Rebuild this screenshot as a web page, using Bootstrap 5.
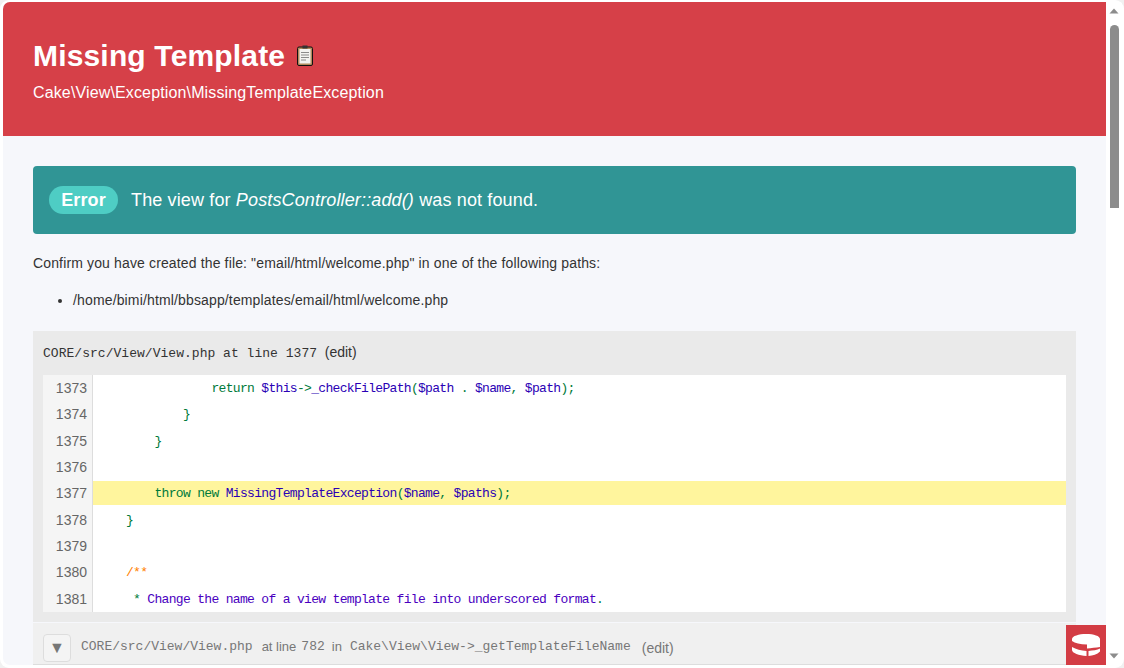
<!DOCTYPE html>
<html lang="en"><head><meta charset="utf-8"><title>Missing Template</title>
<link href="https://cdn.jsdelivr.net/npm/bootstrap@5.3.0/dist/css/bootstrap.min.css" rel="stylesheet">
<style>
html,body{height:100%;overflow:hidden;margin:0;background:#f1f1f1}
body{font-family:"Liberation Sans",Arial,sans-serif;font-size:14px;color:#333}
.win{height:668px;background:#fff;border-radius:9px;padding:2px 2px 3px 3px;overflow:hidden;position:relative}
.pagearea{flex:1 1 auto;min-width:0;background:#f6f7fb;overflow:hidden;height:663px;position:relative;border-radius:7px 0 0 7px}
.hd{background:#d64048;color:#fff;padding:31px 30px 0;height:134px}
.hd h1{font-size:30px;font-weight:700;margin:0;height:46px;line-height:46px;font-family:inherit;letter-spacing:.17px}
.hd .sub{font-size:16px;line-height:24px;margin-top:2px;letter-spacing:.14px}
.clip{display:inline-block;vertical-align:0;margin-left:3px}
.cnt{padding:30px 30px 0}
.errbox{background:#309595;color:#fff;height:68px;border-radius:4px;padding:0 16px;font-size:18px;letter-spacing:.14px}
.errpill{background:#4ecdc4;border-radius:14px;font-weight:700;height:28px;line-height:28px;width:69px;text-align:center;margin-right:13px}
.cfm{margin:20px 0 0;line-height:18px;letter-spacing:.14px}
.pathlist{margin:19px 0 0;padding-left:40px;line-height:18px;letter-spacing:.145px}
.frame{background:#eaeaea;margin-top:22px;padding:10px;height:291px}
.monof{font-family:"Liberation Mono",monospace}
.fhead{font-size:13px;line-height:23px;height:34px;color:#333}
.fhead .monof{letter-spacing:.03px}
.fhead .ed{font-family:"Liberation Sans",sans-serif;font-size:14px;margin-left:4px}
.codebox{background:#fff;height:237px;overflow:hidden}
.cl{height:26.33px;line-height:26.33px;display:flex}
.cl .num{width:50px;flex:none;background:#f5f5f5;border-right:1px solid #ddd;text-align:right;padding-right:5px;font-size:14px;color:#666}
.cl pre{margin:0;padding:1px 0 0 4.5px;font:13px/26.33px "Liberation Mono",monospace;letter-spacing:-.68px;flex:1;overflow:hidden}
.cl.hl pre{background:#fff59d;height:24px;line-height:24px;align-self:center;padding-top:1px}
.tg{color:#007a3a}.tb{color:#2a00b5}.to{color:#ff8000}.ts{color:#4a00c0}
.stk{background:#f0f0f0;margin-top:1px;height:42px;padding:11px 10px 0;color:#777;font-size:13px;border-bottom:1px solid #ddd}
.tog{width:28px;height:28px;border:1px solid #ddd;border-radius:4px;background:#f4f4f4;margin-right:10px;color:#777}
.stk .ed2{font-family:"Liberation Sans",sans-serif;font-size:14px;margin-left:11px}
.stk .al1{font-family:"Liberation Sans",sans-serif;margin:0 5px 0 9px}
.stk .al2{font-family:"Liberation Sans",sans-serif;margin:0 8px 0 7px}
.cakelogo{position:absolute;right:0;bottom:0;width:40px;height:40px;background:#d33c44}
.sbar{width:16px;flex:none;height:663px;background:#fff}
.arr{height:17px}
.thumb{width:9px;height:183px;background:#8c8c8c;border-radius:5px 5px 0 0;margin:6px auto 0}
.sbot{margin-top:auto}
</style></head><body>
<div class="win d-flex">
<div class="pagearea">
 <header class="hd">
  <h1>Missing Template <svg class="clip" width="16" height="21" viewBox="0 0 16 21"><rect x=".5" y="2" width="15" height="18.500" rx="1.500" fill="#b08a5c" stroke="#111"/><rect x="2.500" y="4" width="11" height="14.500" fill="#f2f2f0"/><rect x="5.500" y=".5" width="5" height="3" fill="#333"/><path d="M4 7.500h8M4 10h8M4 12.500h8M4 15h5" stroke="#8a8a8a" fill="none"/></svg></h1>
  <div class="sub">Cake\View\Exception\MissingTemplateException</div>
 </header>
 <div class="cnt">
  <div class="errbox d-flex align-items-center"><span class="errpill">Error</span><span>The view for <em>PostsController::add()</em> was not found.</span></div>
  <p class="cfm">Confirm you have created the file: "email/html/welcome.php" in one of the following paths:</p>
  <ul class="pathlist"><li>/home/bimi/html/bbsapp/templates/email/html/welcome.php</li></ul>
  <div class="frame">
   <div class="fhead"><span class="monof">CORE/src/View/View.php at line 1377</span> <span class="ed">(edit)</span></div>
   <div class="codebox">
<div class="cl"><span class="num">1373</span><pre>                <span class="tg">return</span> <span class="tb">$this</span><span class="tg">-&gt;</span><span class="tb">_checkFilePath</span><span class="tg">(</span><span class="tb">$path</span> <span class="tg">.</span> <span class="tb">$name</span><span class="tg">,</span> <span class="tb">$path</span><span class="tg">);</span></pre></div>
<div class="cl"><span class="num">1374</span><pre>            <span class="tg">}</span></pre></div>
<div class="cl"><span class="num">1375</span><pre>        <span class="tg">}</span></pre></div>
<div class="cl"><span class="num">1376</span><pre> </pre></div>
<div class="cl hl"><span class="num">1377</span><pre>        <span class="tg">throw new</span> <span class="tb">MissingTemplateException</span><span class="tg">(</span><span class="tb">$name</span><span class="tg">,</span> <span class="tb">$paths</span><span class="tg">);</span></pre></div>
<div class="cl"><span class="num">1378</span><pre>    <span class="tg">}</span></pre></div>
<div class="cl"><span class="num">1379</span><pre> </pre></div>
<div class="cl"><span class="num">1380</span><pre>    <span class="to">/**</span></pre></div>
<div class="cl"><span class="num">1381</span><pre>     <span class="tg">*</span> <span class="ts">Change the name of a view template file into underscored format</span><span class="tg">.</span></pre></div>
   </div>
  </div>
  <div class="stk d-flex"><span class="tog d-flex align-items-center justify-content-center fs-6">▼</span><span class="monof lh-lg">CORE/src/View/View.php</span><span class="al1 lh-lg">at line</span><span class="monof lh-lg">782</span><span class="al2 lh-lg">in</span><span class="monof lh-lg">Cake\View\View-&gt;_getTemplateFileName</span><span class="ed2 lh-lg">(edit)</span></div>
 </div>
 <div class="cakelogo"><svg width="40" height="40" viewBox="0 0 40 40"><path d="M6 14C6 11 13 9 20 9c8 0 14 2 14 5v8c-4 .5-9 1-13 1.500v-4C14 19.500 9 18 6 16z" fill="#fff"/><path d="M6 22c4 2.500 9 3.500 14.500 4v5C13 30.500 6 28 6 25z" fill="#fff"/><path d="M22.500 26c4.500-.5 8.500-1 11.500-2.500v3c-3 3-7 4-11.500 4.500z" fill="#fff"/></svg></div>
</div>
<div class="sbar d-flex flex-column">
 <svg class="arr" width="16" height="17" viewBox="0 0 16 17"><path d="M3.500 11.500L8 6.500l4.500 5z" fill="#8c8c8c"/></svg>
 <div class="thumb"></div>
 <svg class="arr sbot" width="16" height="17" viewBox="0 0 16 17"><path d="M3.500 5.500L8 10.500l4.500-5z" fill="#8c8c8c"/></svg>
</div>
</div>
<script src="https://cdn.jsdelivr.net/npm/bootstrap@5.3.0/dist/js/bootstrap.bundle.min.js"></script>
</body></html>
